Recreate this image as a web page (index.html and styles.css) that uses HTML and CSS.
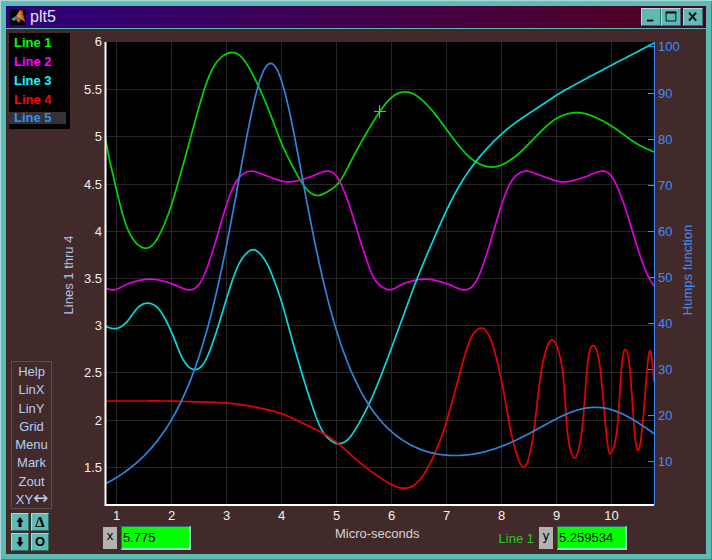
FILE: index.html
```html
<!DOCTYPE html>
<html lang="en">
<head>
    <meta charset="UTF-8">
    <title>plt5</title>
    <link rel="stylesheet" href="styles.css">
</head>
<body>
    <div class="window">
        <div class="titlebar">
            <svg class="app-icon" viewBox="0 0 16 16">
                <rect width="16" height="16" fill="#000"/>
                <polygon points="1,10 6,7 8,9 4,12" fill="#3a9ac4"/>
                <polygon points="6,7 10,1 12,1 15,13 11,10 8,9" fill="#e8842a"/>
                <polygon points="10,1 12,1 15,13 12,9" fill="#b8501c"/>
                <polygon points="8,9 11,10 9,14 6,11" fill="#c8641e"/>
            </svg>
            <span class="title">plt5</span>
            <div class="win-buttons">
                <button class="win-btn"><svg viewBox="0 0 19 18"><rect x="5" y="12" width="7" height="2"/></svg></button>
                <button class="win-btn"><svg viewBox="0 0 20 18"><path d="M4.5 3.5h11v10h-11z" fill="none" stroke="#000"/><rect x="4" y="3" width="12" height="2"/></svg></button>
                <button class="win-btn gap"><svg viewBox="0 0 19 18"><path d="M5 4l8 9M13 4l-8 9" fill="none" stroke="#000" stroke-width="2"/></svg></button>
            </div>
        </div>
        <div class="content">
            <div class="side">
                <div class="legend">
                    <div class="line1">Line 1</div>
                    <div class="line2">Line 2</div>
                    <div class="line3">Line 3</div>
                    <div class="line4">Line 4</div>
                    <div class="line5 active">Line 5</div>
                </div>
                <div class="menu">
                    <div>Help</div>
                    <div>LinX</div>
                    <div>LinY</div>
                    <div>Grid</div>
                    <div>Menu</div>
                    <div>Mark</div>
                    <div>Zout</div>
                    <div>XY<span class="swap">↔</span></div>
                </div>
                <div class="nudge">
                    <button class="nudge-btn"><svg viewBox="0 0 16 16"><path d="M8 3l3.500 5H9.500v5h-3V8H4.500z"/></svg></button>
                    <button class="nudge-btn delta">Δ</button>
                    <button class="nudge-btn"><svg viewBox="0 0 16 16"><path d="M8 13l3.500-5H9.500V3h-3v5H4.500z"/></svg></button>
                    <button class="nudge-btn">O</button>
                </div>
            </div>
            <div class="chart">
                <svg id="plot" class="plot" viewBox="71 29 635 497"></svg>
                <div class="readout">
                    <div class="tag">x</div>
                    <div class="field">5.775</div>
                    <div class="xlabel">Micro-seconds</div>
                    <div class="trace">Line 1</div>
                    <div class="tag">y</div>
                    <div class="field">5.259534</div>
                </div>
            </div>
        </div>
    </div>
    <script src="plot.js"></script>
</body>
</html>
```

FILE: styles.css
```css
body {
    margin: 0;
    font-family: "Liberation Sans", Arial, sans-serif;
    font-size: 13px;
}
.window {
    width: 712px;
    height: 560px;
    box-sizing: border-box;
    padding: 6px;
    display: flex;
    flex-direction: column;
    background: #5fb9b5;
    box-shadow: inset 1px 1px 0 #a8dcd8, inset -1px -1px 0 #3c8c88;
}
.titlebar {
    height: 22px;
    flex: none;
    margin-bottom: 1px;
    display: flex;
    align-items: center;
    background: linear-gradient(to right, #2e007c, #54001e);
}
.app-icon {
    width: 16px;
    height: 16px;
    margin-left: 4px;
}
.title {
    margin-left: 4px;
    font-size: 16px;
    color: #e8e0f4;
}
.win-buttons {
    margin-left: auto;
    margin-right: 3px;
    display: flex;
}
.win-btn {
    height: 18px;
    width: 20px;
    padding: 0;
    border: 1px solid;
    border-color: #a8dcd8 #2f6f6c #2f6f6c #a8dcd8;
    background: #5fb9b5;
}
.win-btn.gap {
    margin-left: 2px;
}
.win-btn svg {
    display: block;
    width: 100%;
    height: 100%;
}
.content {
    flex: 1;
    display: flex;
    background: #432a2a;
}
.side {
    width: 65px;
    flex: none;
    box-sizing: border-box;
    padding: 4px 0 3px 3px;
    display: flex;
    flex-direction: column;
}
.legend {
    width: 61px;
    height: 96px;
    background: #000;
    font-weight: bold;
}
.legend div {
    height: 19px;
    line-height: 19px;
    padding-left: 5px;
}
.line1 { color: #00ff00; }
.line2 { color: #ff00ff; }
.line3 { color: #00ffff; }
.line4 { color: #ff0000; }
.line5 { color: #3a8cf0; }
.legend .active {
    width: 52px;
    height: 12px;
    line-height: 12px;
    margin-top: 3px;
    background: #333;
}
.menu {
    margin: auto 0 0 2px;
    width: 41px;
    height: 148px;
    box-sizing: border-box;
    border: 1px solid #5e4c4c;
    color: #b8ccf4;
    text-align: center;
    padding-top: 1px;
}
.menu div {
    height: 18.3px;
    line-height: 18.3px;
    white-space: nowrap;
}
.swap {
    font-family: "DejaVu Sans", sans-serif;
    font-size: 18px;
    line-height: 14px;
    letter-spacing: -1px;
}
.nudge {
    margin: 4px 0 0 2px;
    display: grid;
    grid-template-columns: 18px 18px;
    grid-auto-rows: 18px;
    gap: 2px;
}
.nudge-btn {
    padding: 0;
    border: 1px solid;
    border-color: #a8dcd8 #2f6f6c #2f6f6c #a8dcd8;
    background: #5fb9b5;
    color: #000;
    font-family: "Liberation Sans", Arial, sans-serif;
    font-size: 13px;
    font-weight: bold;
    line-height: 14px;
}
.nudge-btn svg {
    display: block;
    width: 16px;
    height: 16px;
}
.delta {
    font-family: "Liberation Serif", serif;
    font-size: 15px;
}
.chart {
    flex: 1;
    display: flex;
    flex-direction: column;
}
.plot {
    width: 635px;
    height: 497px;
    flex: none;
    display: block;
    overflow: visible;
}
.readout {
    height: 24px;
    padding: 0 79px 0 32px;
    display: flex;
    align-items: center;
}
.tag {
    width: 14px;
    height: 22px;
    line-height: 18px;
    background: #b2b2b2;
    color: #000;
    text-align: center;
}
.field {
    width: 70px;
    height: 24px;
    box-sizing: border-box;
    margin-left: 4px;
    padding-left: 1px;
    border: 1px solid;
    border-width: 1px 2px 2px 1px;
    border-color: #2f6f6c #9cd0d8 #9cd0d8 #2f6f6c;
    background: #00ff00;
    color: #000;
    line-height: 22px;
}
.xlabel {
    align-self: flex-start;
    margin-left: 144px;
    line-height: 16px;
    color: #d4d4d4;
}
.trace {
    margin-left: auto;
    margin-right: 5px;
    color: #22cc22;
    font-size: 13px;
}
.plot text {
    font-family: "Liberation Sans", Arial, sans-serif;
    font-size: 13px;
}
.tick-left, .tick-bottom { fill: #f0f0f0; }
.tick-right, .label-right { fill: #3c8cff; }
.label-left { fill: #b0c4e8; }
.gridline { stroke: #262626; stroke-width: 1; }
.curve { fill: none; stroke-width: 1.7; }
```

FILE: plot.js
```js
const svg = document.getElementById('plot');
const NS = 'http://www.w3.org/2000/svg';

function add(tag, attrs, text) {
    const el = document.createElementNS(NS, tag);
    for (const k in attrs) el.setAttribute(k, attrs[k]);
    if (text !== undefined) el.textContent = text;
    svg.appendChild(el);
    return el;
}

const left = 106, right = 654, top_ = 42, bottom = 504;

add('rect', { x: left, y: top_, width: right - left, height: bottom - top_, fill: '#000' });

// grid and tick labels
for (let i = 1; i <= 10; i++) {
    const x = 116.5 + (i - 1) * 55;
    add('line', { x1: x, x2: x, y1: top_, y2: bottom, class: 'gridline' });
    add('text', { x: x, y: 520, 'text-anchor': 'middle', class: 'tick-bottom' }, i);
}
for (let i = 0; i <= 9; i++) {
    const y = Math.round(42 + i * 47.2) + 0.5;
    const v = 6 - i * 0.5;
    if (i > 0) add('line', { x1: left, x2: right, y1: y, y2: y, class: 'gridline' });
    add('text', { x: 102, y: i == 0 ? y + 3 : y + 4, 'text-anchor': 'end', class: 'tick-left' }, v);
}
for (let v = 10; v <= 100; v += 10) {
    const y = v == 100 ? 46.5 : Math.round(507.3 - 4.6 * v) + 0.5;
    add('line', { x1: 648, x2: right, y1: y, y2: y, stroke: '#3c8cff' });
    add('text', { x: 658, y: y + 4, class: 'tick-right' }, v);
}

add('text', { class: 'label-left', 'text-anchor': 'middle', transform: 'translate(73 275) rotate(-90)' }, 'Lines 1 thru 4');
add('text', { class: 'label-right', 'text-anchor': 'middle', transform: 'translate(692 270) rotate(-90)' }, 'Humps function');

const clip = add('clipPath', { id: 'area' });
const clipRect = document.createElementNS(NS, 'rect');
clipRect.setAttribute('x', left);
clipRect.setAttribute('y', top_);
clipRect.setAttribute('width', right - left);
clipRect.setAttribute('height', bottom - top_);
clip.appendChild(clipRect);

// points read off as page pixels
const green = [[105,136],[110,163],[115,183],[123,217],[133,240],[146,249],[157,240],[170,210],[178,183],[190,140],[200,103],[210,73],[220,58],[232,52],[243,58],[257,83],[270,113],[283,147],[300,180],[310,193],[319,196],[330,190],[340,182],[353,157],[367,132],[380,111],[392,96],[406,91],[418,96],[432,110],[447,130],[462,150],[475,162],[492,168],[508,162],[525,148],[542,130],[558,117],[578,112],[595,117],[615,128],[635,143],[654,152]];

const magentaHalf = [[105,288],[115,290],[130,283],[150,279],[170,283],[188,290],[198,286],[206,271],[217,237],[227,203],[237,180],[250,171],[267,176],[287,182],[307,178],[327,171],[338,178],[350,207],[360,240],[371,272]];
const magenta = magentaHalf.concat(magentaHalf.slice(1).map(p => [p[0] + 275, p[1]]), [[654, 286]]);
magenta.splice(magentaHalf.length, 0, [377, 283]);

const cyan = [[105,326],[116,329],[127,322],[138,307],[149,303],[160,310],[172,333],[183,360],[194,370],[205,362],[217,330],[227,297],[236,270],[243,257],[253,249],[263,257],[271,272],[282,303],[293,343],[307,390],[320,427],[330,440],[339,444],[350,438],[363,416],[375,392],[388,357],[402,320],[415,283],[432,243],[445,213],[458,187],[475,162],[492,143],[508,128],[525,116],[542,105],[558,94],[578,83],[608,67],[635,53],[654,43]];

const red = [[105,401],[133,401],[167,401],[200,402],[227,403],[250,406],[280,413],[300,422],[323,433],[340,445],[360,463],[375,474],[388,483],[404,489],[418,483],[432,460],[445,427],[458,380],[470,340],[482,328],[492,343],[502,383],[512,437],[523,467],[532,443],[542,367],[552,340],[562,367],[568,437],[575,458],[582,430],[588,360],[594,346],[600,367],[607,440],[611,453],[617,430],[622,363],[626,350],[630,370],[635,437],[639,449],[643,420],[648,360],[651,353],[654,382]];

// Line 5 is the humps function across 0..1
const blue = [];
for (let i = 0; i <= 400; i++) {
    const x = i / 400;
    const h = 1 / ((x - 0.3) * (x - 0.3) + 0.01) + 1 / ((x - 0.9) * (x - 0.9) + 0.04) - 6;
    blue.push([106 + 548 * x, 507.3 - 4.6 * h]);
}

// catmull-rom through the points, sampled once per half pixel of x
function resample(pts) {
    const dense = [];
    for (let i = 0; i < pts.length - 1; i++) {
        const p0 = pts[i - 1] || pts[i], p1 = pts[i], p2 = pts[i + 1], p3 = pts[i + 2] || p2;
        for (let s = 0; s < 12; s++) {
            const t = s / 12;
            const f = k => 0.5 * (2 * p1[k] + (p2[k] - p0[k]) * t + (2 * p0[k] - 5 * p1[k] + 4 * p2[k] - p3[k]) * t * t + (3 * p1[k] - p0[k] - 3 * p2[k] + p3[k]) * t * t * t);
            dense.push([f(0), f(1)]);
        }
    }
    dense.push(pts[pts.length - 1]);
    const out = [];
    let j = 0;
    for (let x = pts[0][0]; x <= pts[pts.length - 1][0]; x += 0.5) {
        while (j < dense.length - 2 && dense[j + 1][0] < x) j++;
        const a = dense[j], b = dense[j + 1];
        const u = b[0] > a[0] ? (x - a[0]) / (b[0] - a[0]) : 0;
        out.push([x, a[1] + (b[1] - a[1]) * u]);
    }
    return out;
}

// the points are read off by eye, so even out the wobble
function soften(pts, widthAt) {
    return pts.map((p, i) => {
        const w = Math.min(Math.round(widthAt(p[0]) * 2), i, pts.length - 1 - i);
        let sum = 0, total = 0;
        for (let k = -w; k <= w; k++) {
            const weight = w + 1 - Math.abs(k);
            sum += pts[i + k][1] * weight;
            total += weight;
        }
        return [p[0], sum / total];
    });
}

function toPath(pts) {
    return 'M' + pts.map(p => p[0].toFixed(1) + ' ' + p[1].toFixed(1)).join('L');
}

const ramp = (x, a, b, from, to) => x < a ? from : x > b ? to : from + (to - from) * (x - a) / (b - a);
const redWidth = x => x < 430 ? 12 : ramp(x, 430, 470, 12, 0);

[
    [soften(resample(green), x => ramp(x, 340, 420, 8, 14)), '#00d800'],
    [soften(resample(magenta), () => 5), '#e000e0'],
    [soften(resample(cyan), x => ramp(x, 342, 380, 6, 18)), '#00dcdc'],
    [soften(resample(red), redWidth), '#e80000'],
    [blue, '#2d86dc']
].forEach(c => {
    add('path', { d: toPath(c[0]), stroke: c[1], class: 'curve', 'clip-path': 'url(#area)' });
});

// axes
add('path', { d: 'M105.5 42V505H654', stroke: '#fff', 'stroke-width': 2, fill: 'none' });
add('line', { x1: 654.5, x2: 654.5, y1: 42, y2: 505, stroke: '#3c8cff' });

// cursor
add('path', { d: 'M374 111.5h12M379.5 105v13', stroke: '#4fc84f', fill: 'none' });
```
